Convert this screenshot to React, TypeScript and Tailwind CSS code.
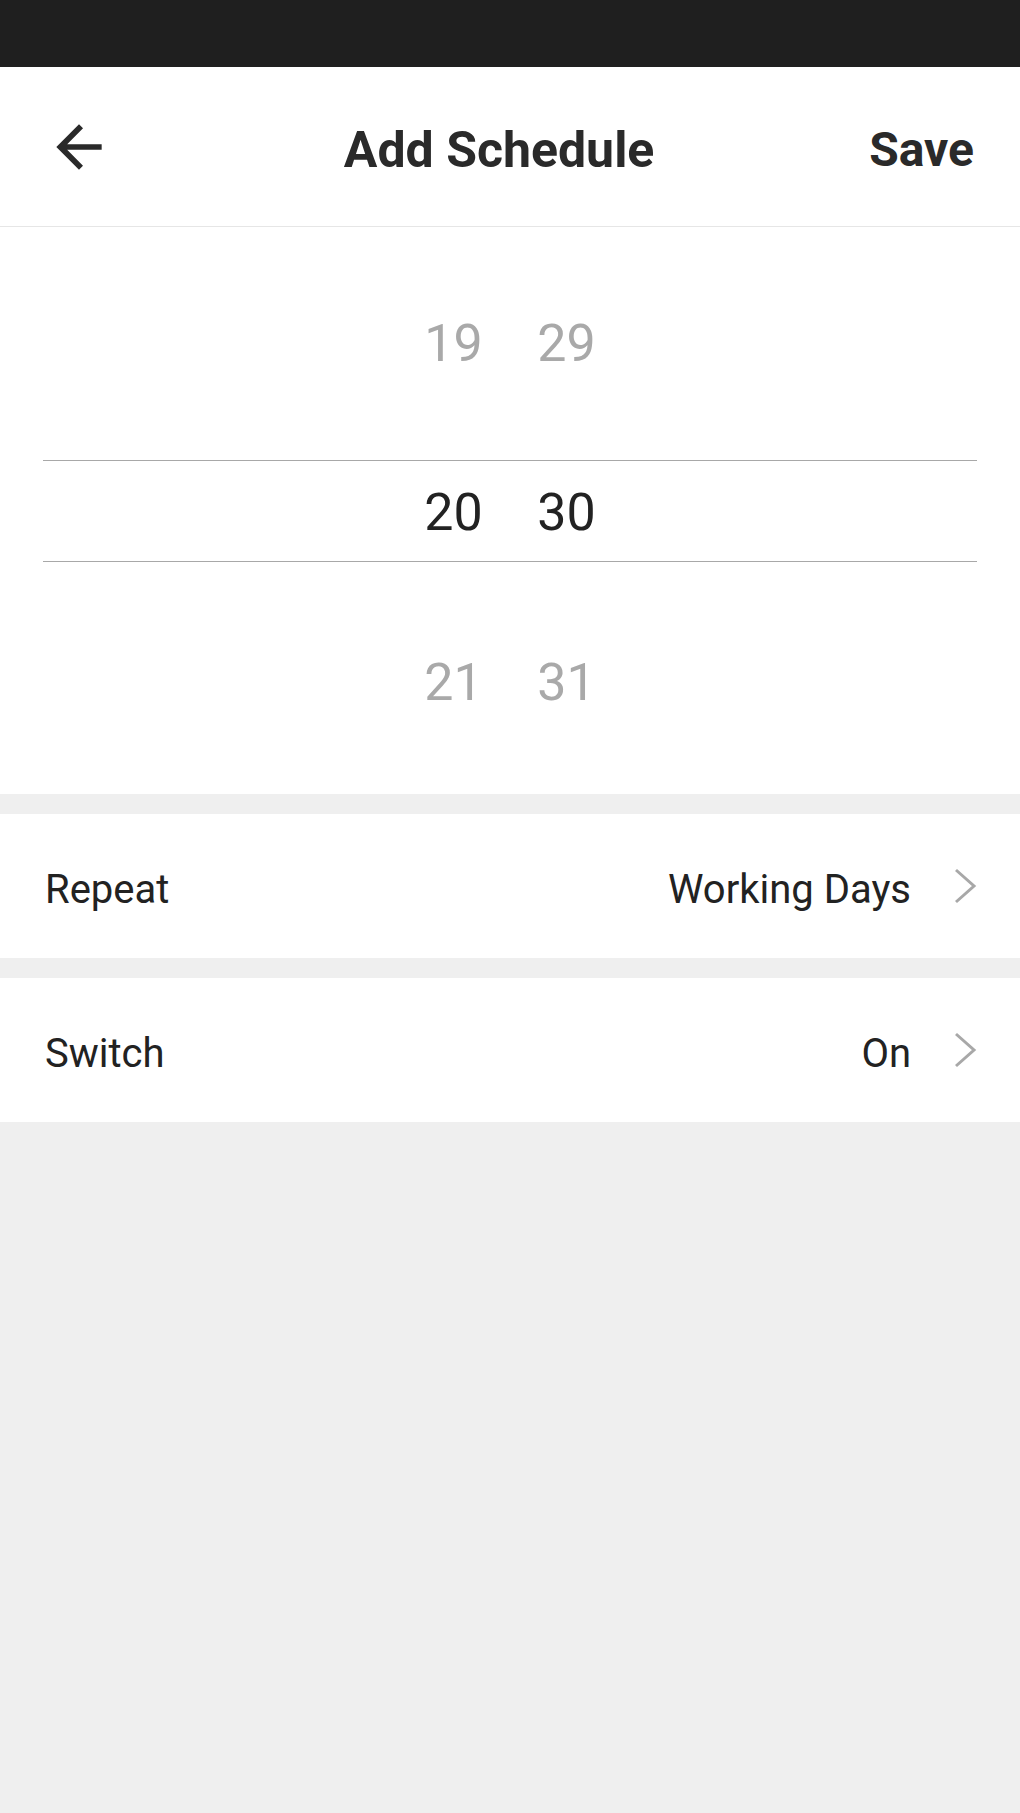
import React from "react";

const font = { fontFamily: "Roboto, 'Noto Sans', sans-serif" };

function Chevron() {
  return (
    <svg width="24" height="36" viewBox="0 0 24 36" className="ml-[42px] shrink-0">
      <polyline points="3,2 21,18 3,34" fill="none" stroke="#a8a8a8" strokeWidth="3" strokeLinejoin="miter" />
    </svg>
  );
}

function Row({ label, value }: { label: string; value: string }) {
  return (
    <div className="h-[144px] bg-white flex items-center pl-[45px] pr-[43px]">
      <div className="flex-1 text-[40px] text-[#222222] leading-none pt-[7px]">{label}</div>
      <div className="text-[40px] text-[#222222] leading-none pt-[7px]">{value}</div>
      <Chevron />
    </div>
  );
}

function Nums({ a, b, cls }: { a: string; b: string; cls: string }) {
  return (
    <div className={`flex justify-center gap-[51px] text-[52px] leading-none ${cls}`}>
      <span className="w-[62px] text-center">{a}</span>
      <span className="w-[62px] text-center">{b}</span>
    </div>
  );
}

export default function App() {
  return (
    <div className="min-h-screen bg-[#efefef] w-full" style={font}>
      <div className="h-[67px] bg-[#1f1f1f]" />
      <div className="h-[160px] bg-white border-b border-[#e6e6e6] flex items-center">
        <div className="w-[129px] shrink-0 flex items-center">
          <svg width="68" height="68" viewBox="0 0 24 24" className="ml-[45px]">
            <path d="M20 11H7.83l5.59-5.59L12 4l-8 8 8 8 1.41-1.41L7.83 13H20v-2z" fill="#2a2a2a" />
          </svg>
        </div>
        <div className="flex-1 text-center text-[50px] font-bold text-[#2a2a2a] leading-none pt-[7px]">Add Schedule</div>
        <div className="pr-[46px] text-[48px] font-bold text-[#2a2a2a] leading-none pt-[7px]">Save</div>
      </div>
      <div className="h-[567px] bg-white flex flex-col">
        <div className="h-[233px] flex items-center justify-center">
          <Nums a="19" b="29" cls="text-[#a9a9a9]" />
        </div>
        <div className="mx-[43px] h-[102px] border-y border-[#a8a8a8] flex items-center justify-center pt-[4px]">
          <Nums a="20" b="30" cls="text-[#222222]" />
        </div>
        <div className="flex-1 flex items-center justify-center pt-[10px]">
          <Nums a="21" b="31" cls="text-[#a9a9a9]" />
        </div>
      </div>
      <div className="h-[20px]" />
      <Row label="Repeat" value="Working Days" />
      <div className="h-[20px]" />
      <Row label="Switch" value="On" />
    </div>
  );
}
